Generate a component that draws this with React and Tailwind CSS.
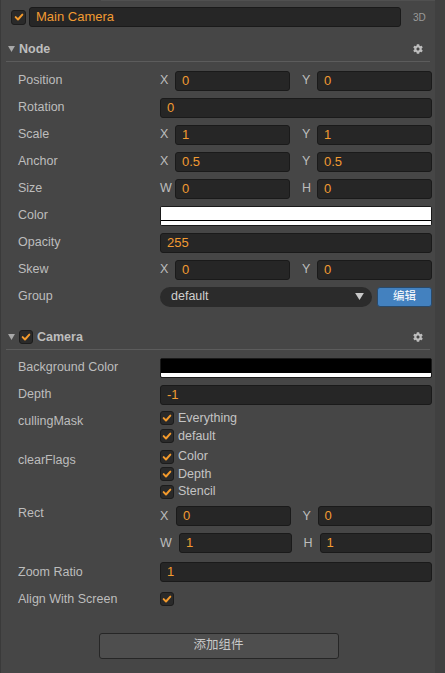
import React from "react";
import { FaCog } from "react-icons/fa";

const FONT = { fontFamily: '"Liberation Sans", "Noto Sans CJK SC", Arial, sans-serif' };

function Check({ size = "w-[15px] h-[15px]" }) {
  return (
    <div className={`${size} shrink-0 rounded-[3px] bg-[#2a2a2a] border border-[#1c1c1c] flex items-center justify-center`}>
      <svg viewBox="0 0 12 12" className="w-[10px] h-[10px]">
        <path d="M2 6.2 L4.8 9 L10 3.2" fill="none" stroke="#f39a2c" strokeWidth="2.4" strokeLinecap="round" strokeLinejoin="round" />
      </svg>
    </div>
  );
}

function Tri() {
  return (
    <svg viewBox="0 0 8 7" className="w-[7px] h-[6px] shrink-0">
      <path d="M0 0 L8 0 L4 7 Z" fill="#a8a8a8" />
    </svg>
  );
}

function Num({ value, className = "" }) {
  return (
    <div className={`h-[20px] rounded-[3px] bg-[#262626] border border-[#1a1a1a] flex items-center pl-[6px] text-[13px] text-[#f29b32] ${className}`}>
      {value}
    </div>
  );
}

function Row({ label, children, h = "h-[27px]" }) {
  return (
    <div className={`flex items-center ${h}`}>
      <div className="w-[142px] shrink-0 text-[12.5px] text-[#bdbdbd]">{label}</div>
      <div className="w-[272px]">{children}</div>
    </div>
  );
}

function Vec({ a, b, av, bv, aw = "w-[15px]", bw = "w-[15px]" }) {
  return (
    <div className="w-full flex items-center">
      <div className={`${aw} shrink-0 text-[12.5px] text-[#bdbdbd]`}>{a}</div>
      <Num value={av} className="flex-1" />
      <div className={`${bw} shrink-0 ml-[12px] text-[12.5px] text-[#bdbdbd]`}>{b}</div>
      <Num value={bv} className="flex-1" />
    </div>
  );
}

function Header({ title, checkbox }) {
  return (
    <div className="mx-[5px] border-b border-[#5c5c5c] h-[25px] flex items-center pl-[2px] pr-[7px] gap-[4px]">
      <Tri />
      {checkbox && <Check size="w-[14px] h-[14px]" />}
      <div className="flex-1 text-[12.5px] font-bold text-[#bdbdbd]">{title}</div>
      <FaCog className="w-[10px] h-[10px] text-[#bdbdbd]" />
    </div>
  );
}

function CheckItem({ label, h = "h-[18px]" }) {
  return (
    <div className={`flex items-center gap-[4px] ${h}`}>
      <Check size="w-[14px] h-[14px]" />
      <span className="text-[12.5px] text-[#c4c4c4]">{label}</span>
    </div>
  );
}

export default function App() {
  return (
    <div className="w-[445px] h-[673px] bg-[#404040] flex overflow-hidden" style={FONT}>
      <div className="w-[435px] h-full bg-[#464646] border-l border-[#3a3a3a] flex flex-col">
        <div className="h-[1px] ml-[100px] bg-[#505050]" />
        {/* name row */}
        <div className="flex items-center h-[31px] pl-[10px] pt-[1px]">
          <Check />
          <div className="ml-[3px] w-[372px] h-[20px] rounded-[3px] bg-[#262626] border border-[#1a1a1a] flex items-center pl-[6px] text-[13px] text-[#f29b32]">
            Main Camera
          </div>
          <div className="ml-[12px] text-[10px] text-[#9a9a9a]">3D</div>
        </div>

        {/* Node */}
        <div className="h-[5px]" />
        <Header title="Node" />
        <div className="pl-[17px] pt-[5px]">
          <Row label="Position"><Vec a="X" b="Y" av="0" bv="0" /></Row>
          <Row label="Rotation"><Num value="0" /></Row>
          <Row label="Scale"><Vec a="X" b="Y" av="1" bv="1" /></Row>
          <Row label="Anchor"><Vec a="X" b="Y" av="0.5" bv="0.5" /></Row>
          <Row label="Size"><Vec a="W" b="H" av="0" bv="0" /></Row>
          <Row label="Color">
            <div className="h-[20px] rounded-[2px] border border-[#1a1a1a] bg-white flex flex-col overflow-hidden">
              <div className="flex-1 bg-white" />
              <div className="h-[1px] bg-black" />
              <div className="h-[4px] bg-white" />
            </div>
          </Row>
          <Row label="Opacity"><Num value="255" /></Row>
          <Row label="Skew"><Vec a="X" b="Y" av="0" bv="0" /></Row>
          <Row label="Group">
            <div className="flex items-center gap-[5px]">
              <div className="flex-1 h-[20px] rounded-full bg-[#2b2b2b] flex items-center pl-[11px] pr-[8px] text-[12.5px] text-[#cfcfcf]">
                <span className="flex-1">default</span>
                <svg viewBox="0 0 10 8" className="w-[9px] h-[7px]">
                  <path d="M0 0 L10 0 L5 8 Z" fill="#c8c8c8" />
                </svg>
              </div>
              <div className="w-[55px] h-[20px] rounded-[3px] bg-[#4381bf] border border-[#2a4a6a] flex items-center justify-center text-[11.5px] text-white">
                编辑
              </div>
            </div>
          </Row>
        </div>

        {/* Camera */}
        <div className="h-[15px]" />
        <Header title="Camera" checkbox />
        <div className="pl-[17px] pt-[4px]">
          <Row label="Background Color">
            <div className="h-[20px] rounded-[2px] border border-[#1a1a1a] bg-black flex flex-col overflow-hidden">
              <div className="flex-1 bg-black" />
              <div className="h-[4px] bg-white" />
            </div>
          </Row>
          <Row label="Depth"><Num value="-1" /></Row>
          <div className="flex items-start pt-[1px]">
            <div className="w-[142px] shrink-0 text-[12.5px] text-[#bdbdbd] pt-[3px]">cullingMask</div>
            <div className="flex flex-col">
              <CheckItem label="Everything" />
              <CheckItem label="default" />
            </div>
          </div>
          <div className="flex items-start pt-[3px]">
            <div className="w-[142px] shrink-0 text-[12.5px] text-[#bdbdbd] pt-[3px]">clearFlags</div>
            <div className="flex flex-col">
              <CheckItem label="Color" h="h-[17.5px]" />
              <CheckItem label="Depth" h="h-[17.5px]" />
              <CheckItem label="Stencil" h="h-[17.5px]" />
            </div>
          </div>
          <div className="flex items-start pt-[2px] pb-[2px]">
            <div className="w-[142px] shrink-0 text-[12.5px] text-[#bdbdbd] pt-[1px]">Rect</div>
            <div className="w-[272px] flex flex-col">
              <div className="h-[27px] flex items-center">
                <Vec a="X" b="Y" av="0" bv="0" aw="w-[16px]" />
              </div>
              <div className="h-[27px] flex items-center">
                <Vec a="W" b="H" av="1" bv="1" aw="w-[19px]" bw="w-[16px]" />
              </div>
            </div>
          </div>
          <Row label="Zoom Ratio"><Num value="1" /></Row>
          <Row label="Align With Screen"><Check size="w-[14px] h-[14px]" /></Row>
        </div>

        <div className="flex justify-center pt-[20px] pl-[1px]">
          <div className="w-[240px] h-[26px] rounded-[3px] bg-[#4e4e4e] border border-[#262626] flex items-center justify-center text-[12.5px] text-[#c8c8c8]">
            添加组件
          </div>
        </div>
      </div>
    </div>
  );
}
